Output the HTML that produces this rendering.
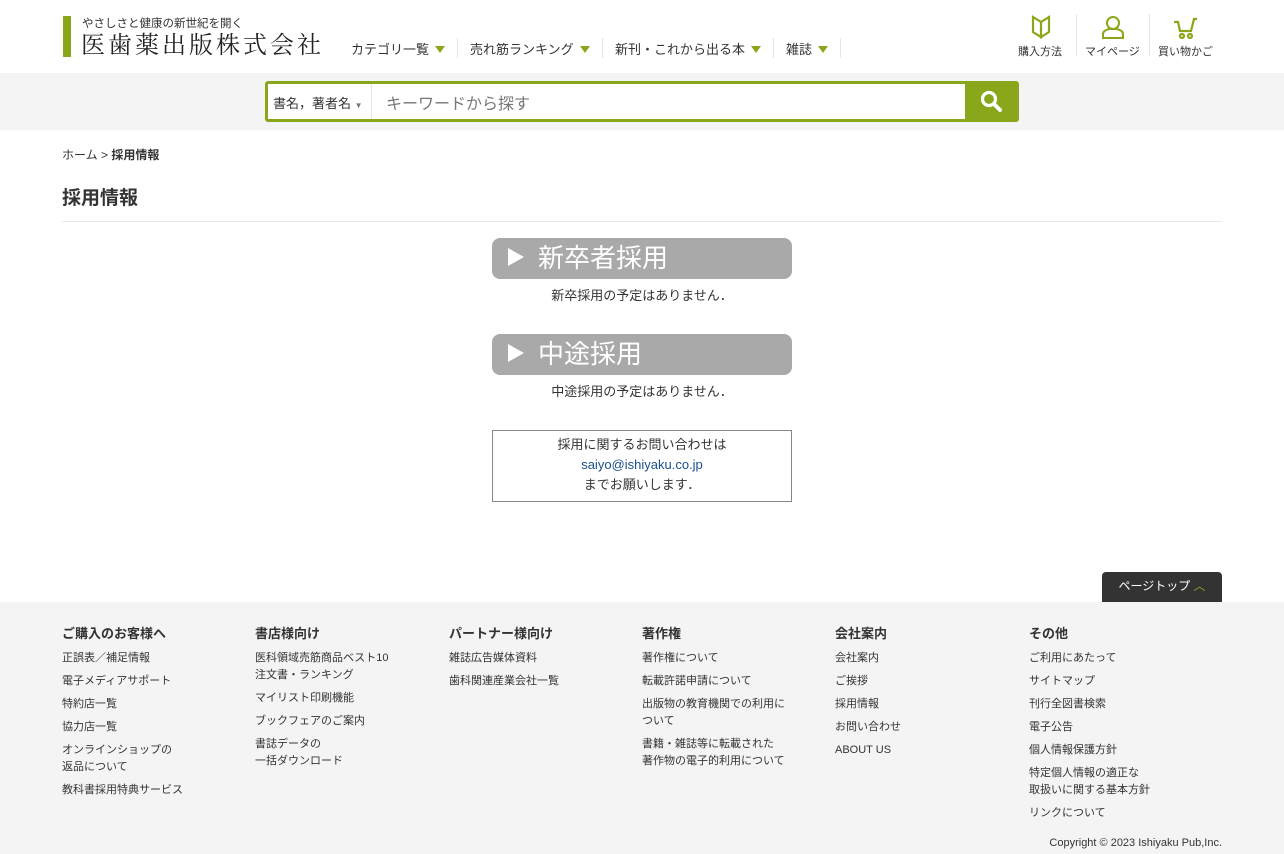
<!DOCTYPE html>
<html><head><meta charset="utf-8"><style>
*{margin:0;padding:0;box-sizing:border-box}
body{width:1284px;height:854px;overflow:hidden;background:#fff;font-family:"Liberation Sans","Noto Sans CJK JP",sans-serif;color:#333;position:relative}
.a{position:absolute}
.nav{font-size:13px;color:#333;top:39px}
.tri{display:inline-block;width:0;height:0;border-left:5px solid transparent;border-right:5px solid transparent;border-top:7px solid #8aa71c;margin-left:6px;vertical-align:1px}
.sep{top:38px;width:1px;height:20px;background:#e5e5e5}
.ic{font-size:11px;color:#333;top:43px}
.btn{left:492px;width:300px;height:41px;background:#a9a9a9;border-radius:8px;color:#fff;font-size:26px;line-height:40px;padding-left:16px}
.btn b{display:inline-block;width:0;height:0;border-top:9px solid transparent;border-bottom:9px solid transparent;border-left:16px solid #fff;margin-right:14px;vertical-align:1px}
.c{font-size:13px;width:300px;left:492px;text-align:center}
.ft{background:#f4f4f4;top:602px;left:0;width:1284px;height:252px}
.col{top:626px;font-size:11px;color:#333;line-height:17px}
.col h4{font-size:13px;font-weight:bold;margin-bottom:9px;line-height:15px}
.col p{margin-bottom:6px}
</style></head><body>
<div class="a" style="left:63px;top:16px;width:8px;height:41px;background:#8aa71c"></div>
<div class="a" style="left:82px;top:15px;font-size:11.5px;color:#333">やさしさと健康の新世紀を開く</div>
<div class="a" style="left:81px;top:29px;font-size:24px;letter-spacing:3px;color:#222;font-family:'Noto Serif CJK SC',serif;line-height:28px">医歯薬出版株式会社</div>
<div class="a nav" style="left:351px">カテゴリ一覧<span class="tri"></span></div>
<div class="a sep" style="left:457px"></div>
<div class="a nav" style="left:470px">売れ筋ランキング<span class="tri"></span></div>
<div class="a sep" style="left:602px"></div>
<div class="a nav" style="left:615px">新刊・これから出る本<span class="tri"></span></div>
<div class="a sep" style="left:773px"></div>
<div class="a nav" style="left:786px">雑誌<span class="tri"></span></div>
<div class="a sep" style="left:840px"></div>
<svg class="a" style="left:1031px;top:15px" width="20" height="24" viewBox="0 0 20 24" fill="none" stroke="#8aa71c" stroke-width="2.2"><path d="M2 2l8 5v15l-8-5z M18 2l-8 5v15l8-5z"/></svg>
<div class="a ic" style="left:1018px">購入方法</div>
<div class="a" style="left:1076px;top:14px;width:1px;height:42px;background:#e5e5e5"></div>
<svg class="a" style="left:1101px;top:15px" width="24" height="24" viewBox="0 0 24 24" fill="none" stroke="#8aa71c" stroke-width="2"><circle cx="12" cy="8" r="6"/><path d="M2 23v-4c0-3 3-4 6-5h8c3 1 6 2 6 5v4z"/></svg>
<div class="a ic" style="left:1085px">マイページ</div>
<div class="a" style="left:1149px;top:14px;width:1px;height:42px;background:#e5e5e5"></div>
<svg class="a" style="left:1173px;top:16px" width="26" height="24" viewBox="0 0 26 24" fill="none" stroke="#8aa71c" stroke-width="2.2"><path d="M1 6h4l2 9h11l3-12h3"/><circle cx="9" cy="20" r="2"/><circle cx="17" cy="20" r="2"/></svg>
<div class="a ic" style="left:1158px">買い物かご</div>

<div class="a" style="left:0;top:73px;width:1284px;height:57px;background:#f4f4f4"></div>
<div class="a" style="left:265px;top:81px;width:754px;height:41px;background:#8aa71c;border-radius:3px"></div>
<div class="a" style="left:268px;top:84px;width:697px;height:35px;background:#fff"></div>
<div class="a" style="left:273px;top:93px;font-size:13px">書名，著者名 <span style="font-size:8px;color:#777">▼</span></div>
<div class="a" style="left:371px;top:84px;width:1px;height:35px;background:#e5e5e5"></div>
<div class="a" style="left:386px;top:90px;font-size:16px;color:#777">キーワードから探す</div>
<svg class="a" style="left:980px;top:90px" width="23" height="23" viewBox="0 0 23 23"><circle cx="9" cy="9" r="6.5" fill="none" stroke="#fff" stroke-width="3.2"/><path d="M14 14l6 6" stroke="#fff" stroke-width="4" stroke-linecap="round"/></svg>

<div class="a" style="left:62px;top:146px;font-size:12px">ホーム &gt; <b>採用情報</b></div>
<div class="a" style="left:62px;top:183px;font-size:19px;font-weight:bold">採用情報</div>
<div class="a" style="left:62px;top:221px;width:1160px;height:1px;background:#e8e8e8"></div>

<div class="a btn" style="top:238px"><b></b>新卒者採用</div>
<div class="a c" style="top:285px">新卒採用の予定はありません．</div>
<div class="a btn" style="top:334px"><b></b>中途採用</div>
<div class="a c" style="top:381px">中途採用の予定はありません．</div>
<div class="a c" style="top:430px;height:72px;border:1px solid #888;line-height:20px;padding-top:4px">採用に関するお問い合わせは<br><span style="color:#1a4f8b">saiyo@ishiyaku.co.jp</span><br>までお願いします．</div>

<div class="a" style="left:1102px;top:572px;width:120px;height:30px;background:#333;border-radius:4px 4px 0 0;color:#fff;font-size:12px;text-align:center;line-height:28px">ページトップ <span style="color:#8aa71c">︿</span></div>
<div class="a ft"></div>
<div class="a col" style="left:62px"><h4>ご購入のお客様へ</h4><p>正誤表／補足情報</p><p>電子メディアサポート</p><p>特約店一覧</p><p>協力店一覧</p><p>オンラインショップの<br>返品について</p><p>教科書採用特典サービス</p></div>
<div class="a col" style="left:255px"><h4>書店様向け</h4><p>医科領域売筋商品ベスト10<br>注文書・ランキング</p><p>マイリスト印刷機能</p><p>ブックフェアのご案内</p><p>書誌データの<br>一括ダウンロード</p></div>
<div class="a col" style="left:449px"><h4>パートナー様向け</h4><p>雑誌広告媒体資料</p><p>歯科関連産業会社一覧</p></div>
<div class="a col" style="left:642px"><h4>著作権</h4><p>著作権について</p><p>転載許諾申請について</p><p>出版物の教育機関での利用に<br>ついて</p><p>書籍・雑誌等に転載された<br>著作物の電子的利用について</p></div>
<div class="a col" style="left:835px"><h4>会社案内</h4><p>会社案内</p><p>ご挨拶</p><p>採用情報</p><p>お問い合わせ</p><p>ABOUT US</p></div>
<div class="a col" style="left:1029px"><h4>その他</h4><p>ご利用にあたって</p><p>サイトマップ</p><p>刊行全図書検索</p><p>電子公告</p><p>個人情報保護方針</p><p>特定個人情報の適正な<br>取扱いに関する基本方針</p><p>リンクについて</p></div>
<div class="a" style="right:62px;top:837px;font-size:11px">Copyright © 2023 Ishiyaku Pub,Inc.</div>
</body></html>
